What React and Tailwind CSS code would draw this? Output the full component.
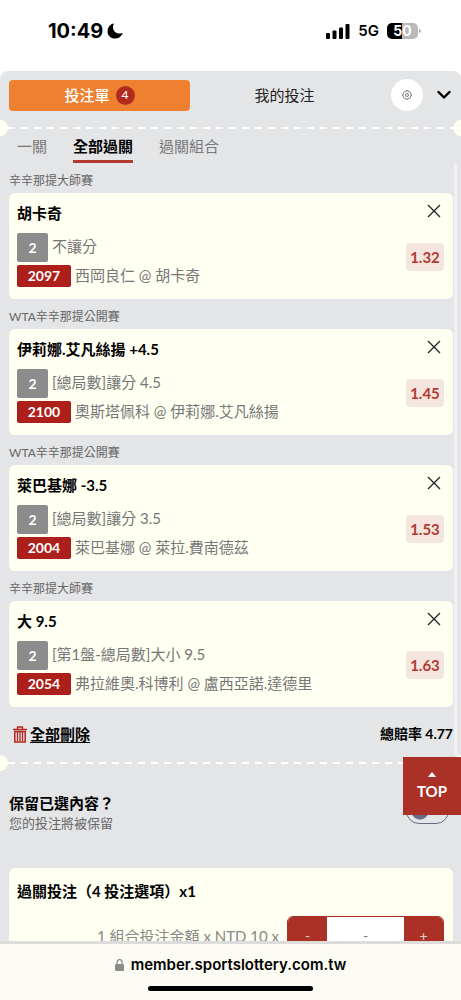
import React, { useState } from "react";

const initialBets = [
  { id: 1, league: "辛辛那提大師賽", pick: "胡卡奇", market: "不讓分", code: "2097", match: "西岡良仁 @ 胡卡奇", odds: "1.32" },
  { id: 2, league: "WTA辛辛那提公開賽", pick: "伊莉娜.艾凡絲揚 +4.5", market: "[總局數]讓分 4.5", code: "2100", match: "奧斯塔佩科 @ 伊莉娜.艾凡絲揚", odds: "1.45" },
  { id: 3, league: "WTA辛辛那提公開賽", pick: "萊巴基娜 -3.5", market: "[總局數]讓分 3.5", code: "2004", match: "萊巴基娜 @ 萊拉.費南德茲", odds: "1.53" },
  { id: 4, league: "辛辛那提大師賽", pick: "大 9.5", market: "[第1盤-總局數]大小 9.5", code: "2054", match: "弗拉維奧.科博利 @ 盧西亞諾.達德里", odds: "1.63" },
];

const StatusBar = () => (
  <div className="h-[71px] shrink-0 flex items-start justify-between bg-white pl-12 pr-[43px] pt-[19px] font-['Inter',sans-serif] text-black">
    <div className="flex items-center gap-1">
      <span className="text-[20px] leading-6 font-bold">10:49</span>
      <svg width="16" height="16" viewBox="0 0 16 16" fill="currentColor">
        <path d="M6 0.500C2.500 1.800 0.500 4.700 0.500 8.200C0.500 12.400 3.900 15.600 8 15.600C11.500 15.600 14.300 13.700 15.600 10.600C15.700 10.100 15.300 9.800 14.900 10C12.300 11.100 9.600 10.500 7.800 8.700C5.900 6.800 5.500 3.900 6.600 1.200C6.800 0.700 6.500 0.300 6 0.500Z" />
      </svg>
    </div>
    <div className="flex h-6 items-center gap-2">
      <svg width="24" height="15" viewBox="0 0 24 15" fill="currentColor">
        <rect x="0" y="9" width="4" height="6" rx="1" />
        <rect x="6.500" y="6.500" width="4" height="8.500" rx="1" />
        <rect x="13" y="3.500" width="4" height="11.500" rx="1" />
        <rect x="19.500" y="0" width="4" height="15" rx="1" />
      </svg>
      <span className="text-[15px] font-semibold">5G</span>
      <div className="relative flex h-4 w-[31px] items-center justify-center rounded-[5px] bg-[linear-gradient(to_right,#000_50%,#b9b9b9_50%)] text-sm leading-4 font-bold text-white">
        50
        <span className="absolute -right-[3px] top-[6px] h-1 w-[2px] rounded-r bg-[#b9b9b9]"></span>
      </div>
    </div>
  </div>
);

const Divider = () => (
  <div className="relative h-4 flex items-center overflow-hidden">
    <div className="h-[2px] w-full bg-[repeating-linear-gradient(to_right,#fff_0px,#fff_7px,transparent_7px,transparent_13px)] bg-[position:8px_0]"></div>
    <span className="absolute -left-2 size-4 rounded-full bg-[#fffff2]"></span>
    <span className="absolute -right-2 size-4 rounded-full bg-[#fffff2]"></span>
  </div>
);

const BetCard = ({ bet, onRemove }) => (
  <li>
    <h3 className="pt-[10px] pb-1 text-xs leading-4 text-[#666]">{bet.league}</h3>
    <div className="flex justify-between rounded-md bg-[#fffff2] pl-2 pr-[9px] pt-2 pb-3">
      <div>
        <p className="text-[15px] leading-6 font-bold text-black">{bet.pick}</p>
        <div className="mt-2 flex items-start gap-1">
          <span className="flex h-[29px] w-[31px] items-center justify-center rounded-xs bg-[#8c8c8c] text-sm font-bold text-white">2</span>
          <span className="text-[15px] leading-[26px] text-[#777]">{bet.market}</span>
        </div>
        <div className="mt-[3px] flex items-start gap-1">
          <span className="flex h-[22px] w-[54px] items-center justify-center rounded-xs bg-[#ad1f1a] text-sm font-bold text-white">{bet.code}</span>
          <span className="text-[15px] leading-5 text-[#777]">{bet.match}</span>
        </div>
      </div>
      <div className="flex flex-col items-end">
        <button type="button" aria-label="刪除" onClick={onRemove} className="flex size-5 items-center justify-center text-[#222]">
          <svg width="14" height="14" viewBox="0 0 14 14" fill="none" stroke="currentColor" strokeWidth="1.300">
            <path d="M1 1L13 13M13 1L1 13" />
          </svg>
        </button>
        <span className="mt-[22px] flex h-7 w-[38px] items-center justify-center rounded bg-[#f4e6df] text-[15px] font-bold text-[#b13a31]">{bet.odds}</span>
      </div>
    </div>
  </li>
);

const App = () => {
  const [bets, setBets] = useState(initialBets);

  return (
    <div className="flex h-screen flex-col overflow-hidden bg-white font-['Lato','Noto_Sans_CJK_TC',sans-serif]">
      <StatusBar />

      <main className="relative min-h-0 flex-1 overflow-hidden rounded-t-lg bg-[#e4e5e7]">
        <header className="flex items-center pt-2 pl-[9px] pr-2">
          <button type="button" className="flex h-[31px] w-[181px] items-center justify-center gap-[6px] rounded bg-[#ef8030] text-[15px] font-medium text-white">
            投注單
            <span className="flex size-[19px] items-center justify-center rounded-full bg-[#b32b1e] text-xs">4</span>
          </button>
          <button type="button" className="flex-1 pr-3 text-[15px] text-[#222]">我的投注</button>
          <button type="button" aria-label="設定" className="flex size-8 items-center justify-center rounded-full bg-white text-[#555]">
            <svg width="10" height="10" viewBox="0 0 24 24" fill="none" stroke="currentColor" strokeWidth="1.800">
              <path d="M10 1.500h4l1 3 3-1 2.500 2.500-1 3 3 1v4l-3 1 1 3-2.500 2.500-3-1-1 3h-4l-1-3-3 1L3.500 18l1-3-3-1v-4l3-1-1-3L6 3.500l3 1z" />
              <circle cx="12" cy="12" r="3.500" />
            </svg>
          </button>
          <button type="button" aria-label="收合" className="ml-[14px] mr-[2px] text-black">
            <svg width="14" height="10" viewBox="0 0 14 10" fill="none" stroke="currentColor" strokeWidth="2.400">
              <path d="M1.500 2L7 7.500L12.500 2" strokeLinecap="round" strokeLinejoin="round" />
            </svg>
          </button>
        </header>

        <div className="mt-[9px]">
          <Divider />
        </div>

        <nav className="flex items-start gap-[26px] pl-[17px] text-[15px] leading-5 text-[#777]">
          <a href="#single">一關</a>
          <a href="#all" className="border-b-[3px] border-[#b13a31] pb-1 font-bold text-black">全部過關</a>
          <a href="#combo">過關組合</a>
        </nav>

        <section className="mr-1 border-r-[3px] border-[#f1f1f3] pl-[9px] pr-[1px]">
          <ul>
            {bets.map((bet) => (
              <BetCard key={bet.id} bet={bet} onRemove={() => setBets(bets.filter((b) => b.id !== bet.id))} />
            ))}
          </ul>
          <div className="flex items-center justify-between pt-[15px] pb-[9px] text-[15px] leading-6 font-bold text-black">
            <button type="button" onClick={() => setBets([])} className="flex items-center gap-[3px] pl-1">
              <svg width="14" height="17" viewBox="0 0 14 17" fill="none" stroke="#b3261e" strokeWidth="1.300">
                <path d="M0 3.500H14M4.500 3V1H9.500V3" />
                <path d="M1.800 5.500H12.200V16H1.800Z" strokeWidth="1.500" />
                <path d="M4.500 6V15M7 6V15M9.500 6V15" />
              </svg>
              <span className="underline underline-offset-2">全部刪除</span>
            </button>
            <span className="text-sm leading-6">總賠率 4.77</span>
          </div>
        </section>

        <Divider />

        <section className="flex items-center justify-between pl-[9px] pr-3 pt-5">
          <label htmlFor="keep" className="block">
            <span className="block text-[15px] leading-6 font-bold text-black">保留已選內容？</span>
            <span className="block text-[13px] leading-4 text-[#666]">您的投注將被保留</span>
          </label>
          <input
            id="keep"
            type="checkbox"
            className="h-[26px] w-[43px] appearance-none rounded-full border border-[#6b6a86] bg-[radial-gradient(circle_at_13px_12px,#6b6a86_8px,transparent_9px)]"
          />
        </section>

        <section className="ml-[9px] mr-2 mt-[37px] rounded-md bg-[#fffff2] pl-2 pr-[9px] pt-[11px] pb-3">
          <h2 className="text-[15px] leading-6 font-bold text-black">過關投注（4 投注選項）x1</h2>
          <div className="mt-[13px] flex items-center justify-end gap-2">
            <label htmlFor="stake" className="text-[15px] leading-5 text-[#888]">1 組合投注金額 x NTD 10 x</label>
            <div className="flex h-10 w-[157px] overflow-hidden rounded-md border border-[#ab3025] bg-white">
              <button type="button" className="w-[39px] bg-[#ab3025] text-sm text-[#eccfcb]">-</button>
              <input id="stake" type="text" placeholder="-" className="min-w-0 flex-1 text-center text-sm placeholder:text-[#777]" />
              <button type="button" className="w-[39px] bg-[#ab3025] text-sm text-[#eccfcb]">+</button>
            </div>
          </div>
        </section>

        <a href="#top" className="absolute right-0 bottom-[126px] flex size-[58px] flex-col items-center justify-center bg-[#ab3025] text-[15px] leading-5 font-bold text-white">
          <svg width="8" height="5" viewBox="0 0 8 5" fill="currentColor" className="mb-1">
            <path d="M4 0L8 5H0Z" />
          </svg>
          TOP
        </a>
      </main>

      <footer className="flex h-[59px] shrink-0 flex-col items-center justify-between border-t-[3px] border-[#dcdcda] bg-[#fcfcf4] pt-[9px] pb-[9px] font-['Inter',sans-serif]">
        <div className="flex items-center gap-[7px] text-[15px] leading-6 font-semibold text-black">
          <svg width="9" height="12" viewBox="0 0 9 12">
            <rect x="0" y="5" width="9" height="7" rx="1.300" fill="#8b8b8b" />
            <path d="M2 5.500V3.200a2.500 2.500 0 0 1 5 0V5.500" fill="none" stroke="#8b8b8b" strokeWidth="1.300" />
          </svg>
          member.sportslottery.com.tw
        </div>
        <div className="h-[5px] w-[165px] rounded-full bg-black"></div>
      </footer>
    </div>
  );
};

export default App;
